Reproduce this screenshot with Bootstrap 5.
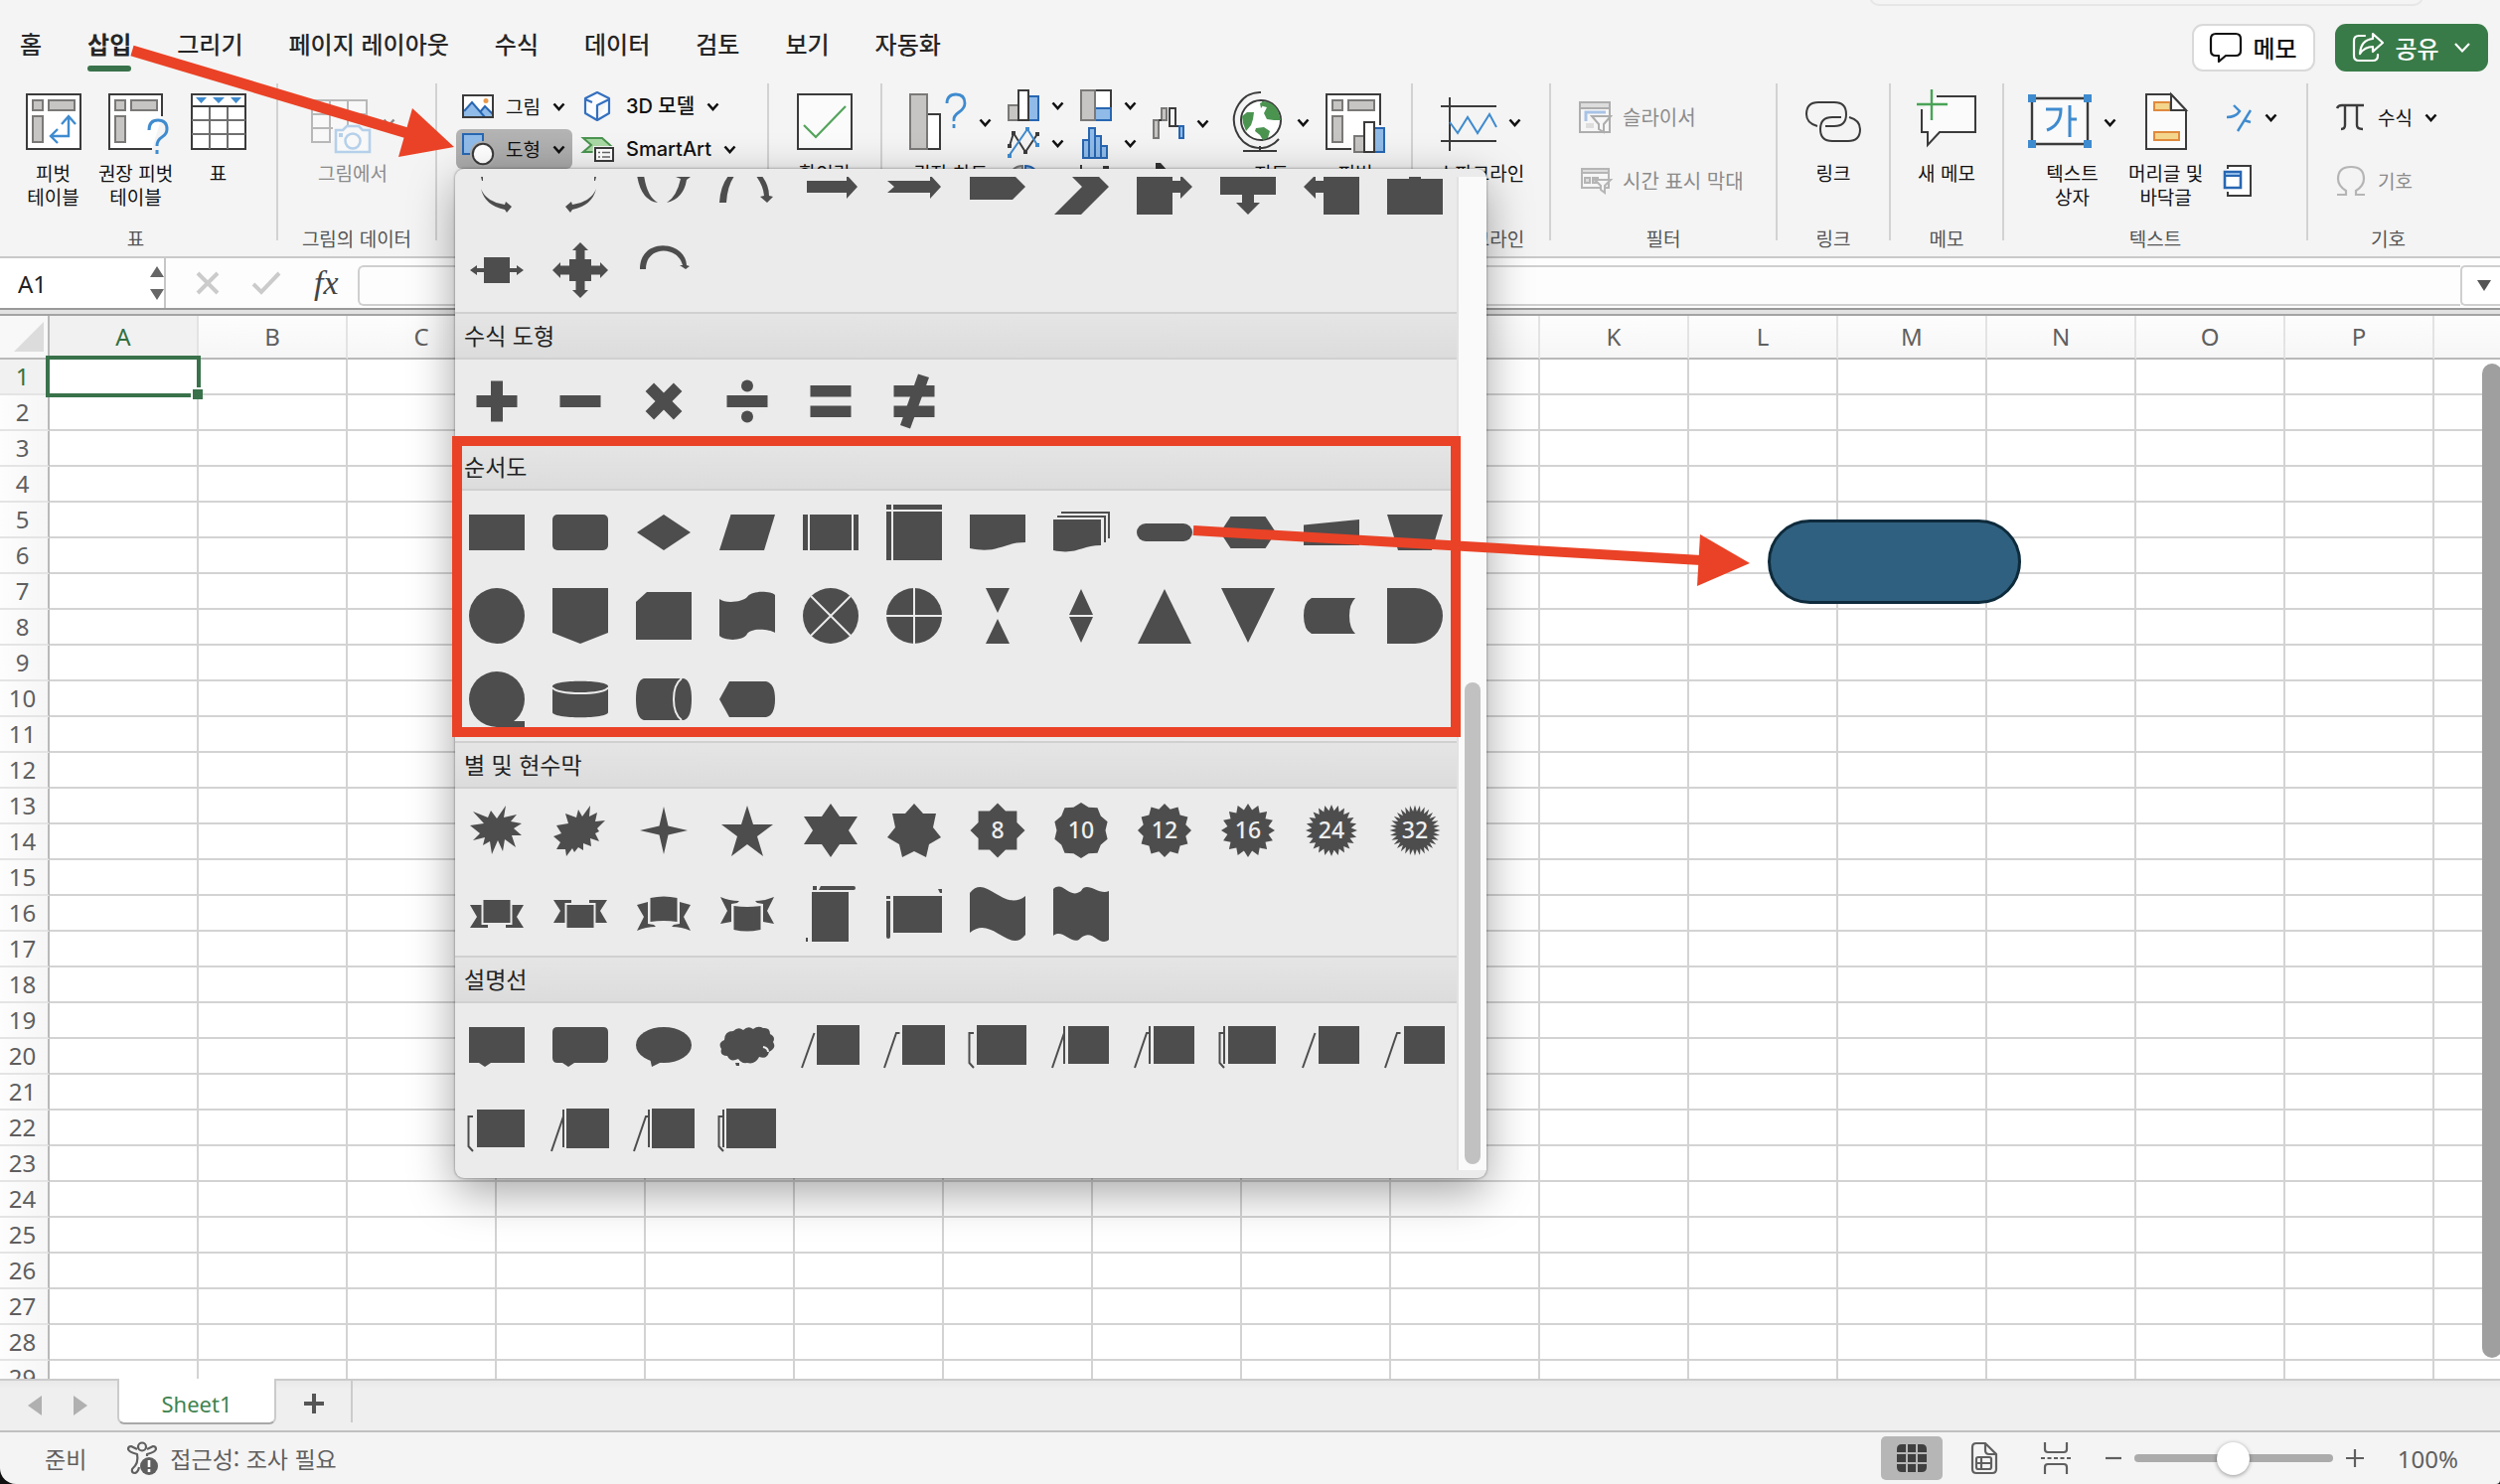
<!DOCTYPE html>
<html lang="ko">
<head>
<meta charset="utf-8">
<meta name="viewport" content="width=device-width, initial-scale=1">
<title>Sheet1</title>
<link href="https://cdn.jsdelivr.net/npm/bootstrap@5.3.0/dist/css/bootstrap.min.css" rel="stylesheet">
<style>
:root{--ink:#3b3b3b;--blue:#3f8bcf;--navy:#2866b2;--sky:#90bbe8;--green:#35703f;--red:#ea4226}
html,body{height:100%}
body{background:#111;font-family:"Noto Sans CJK KR","Noto Sans",sans-serif;color:#111;overflow:hidden}
button{color:inherit;background:none;border:0;padding:0}
svg{display:block;flex:none;overflow:visible}
.app{height:100vh;background:#f4f4f4;border-radius:0 0 4px 16px;overflow:hidden;position:relative}
.peek{right:77px;top:-14px;width:558px;height:20px;border:2px solid #e6e6e6;border-radius:10px}
.tabs{height:84px;padding-left:20px;gap:46px}
.tabs a{color:#262626;font-size:24px;line-height:36px;padding-top:26px;text-decoration:none;white-space:nowrap;font-weight:500}
.tabs a.on{font-weight:700}
.tabs a.on::after{content:"";display:block;height:6px;margin-top:4px;border-radius:3px;background:#39724a}
.topbtns{padding:24px 12px 0 0;gap:20px}
.topbtns button{height:48px;border-radius:11px;font-size:24px;font-weight:500;gap:11px}
.memo{width:124px;background:#fff;border:2px solid #d9d9d9!important}
.share{width:154px;background:#397b48;color:#fff}
.ribbon{height:176px;border-bottom:2px solid #c9c9c9;font-size:19px;line-height:24px}
.grp{position:relative;height:158px}
.grp:not(:last-child){border-right:2px solid #d2d2d2}
.grp .body{height:144px;padding-top:6px}
.grp .cap{line-height:24px;color:#555;text-align:center;white-space:nowrap}
.big{display:flex;flex-direction:column;align-items:center;text-align:center;white-space:nowrap}
.big .ic{display:flex;align-items:center;height:66px;margin-bottom:6px;gap:12px}
.w83{width:83px}
.g-table{padding:0 17px 0 12px;width:280px}
.g-160{width:160px}.g-114{width:114px}.g-334{width:334px}.g-534{width:534px}.g-140{width:139px}.g-228{width:228px}.g-306{width:306px}
.g-160 .body{padding-right:8px}
.g-334 .body{padding:3px 0 0 19px}
.g-334 .col2{padding-left:10px}
.itm{display:flex;align-items:center;height:40px;white-space:nowrap;margin-bottom:3px;gap:12px}
.itm.pk{padding:0 6px;width:117px}
.itm.open{background:linear-gradient(#b4b4b4,#a9a9a9);border-radius:6px}
.latin{font-family:Inter,"Noto Sans CJK KR",sans-serif;font-weight:500;font-size:20px}
.g-534 .body{padding-left:27px;gap:16px}
.stack{display:flex;flex-direction:column;gap:6px}
.stack button{display:flex;gap:12px;align-items:center;height:32px}
.stack.wf{gap:24px;padding-top:18px}
.dim{color:#8b8b8b}
.pair{display:flex;align-items:center;gap:12px;height:56px;white-space:nowrap}
.pair+.pair{margin-top:8px}
.g-228 .pair{font-size:20px}
.g-306 .body{gap:12px}
.g-306 .art{padding-left:8px}
.chev{width:13px;height:9px}
.fbar{height:52px;background:#fdfdfd;border-bottom:2px solid #999}
.namebox{width:168px;border-right:2px solid #c6c6c6;background:#fff;padding-right:0}
.namebox input{width:151px;border:0;background:none;padding:0 0 0 18px;font:24px "Noto Sans",sans-serif;color:#222}
.fbar .fx{gap:34px;width:193px;padding-left:31px}
.fbar .fx i{font:italic 34px "Liberation Serif",serif;color:#444}
.fbar .line{height:41px;margin-top:7px;border:2px solid #cfcfcf;border-right:0;border-radius:6px 0 0 6px;background:#fdfdfd;width:100%}
.fbar .drop{width:40px;height:41px;margin-top:7px;border:2px solid #cfcfcf;border-right:0;border-radius:5px 0 0 5px;background:#fff;flex:none;padding-left:15px}
.rule{height:6px;background:#e2e2e2;border-bottom:2px solid #a3a3a3}
.sheet{flex:1;min-height:0;overflow:hidden;position:relative;background:#fff}
.cells{table-layout:fixed;border-collapse:separate;border-spacing:0;width:2600px;font:24px/34px "Noto Sans",sans-serif;color:#5f5f5f}
.cells th{font-weight:400;text-align:center;padding:0}
.cells thead th{height:44px;background:linear-gradient(#fdfdfd,#f6f6f6);border-bottom:2px solid #b9b9b9;border-right:2px solid #e3e3e3}
.cells thead th.pick{background:#f1f1f1;color:#35703f}
.cells tbody th{height:36px;border-right:2px solid #b9b9b9;border-bottom:2px solid #e4e4e4;background:linear-gradient(90deg,#fdfdfd,#f6f6f6);padding-right:3px}
.cells tbody th.pick{background:#f1f1f1;color:#35703f}
.cells td{height:36px;padding:0;border-right:2px solid #d3d3d3;border-bottom:2px solid #d3d3d3}
.cells thead th.corner{border-right-color:#b9b9b9;padding-left:14px;background:#f8f8f8}
.cursor{left:46px;top:40px;width:156px;height:42px;border:4px solid #39724a}
.cursor::after{content:"";position:absolute;right:-6px;bottom:-6px;width:12px;height:12px;background:#39724a;border:solid #fff;border-width:2px 0 0 2px}
.vbar{right:-2px;top:48px;bottom:21px;width:20px;border-radius:10px;background:#9f9f9f}
.pill{left:1779px;top:205px;width:255px;height:85px;border-radius:43px;background:#30607f;border:3px solid #0e2b3c}
.tabsbar{height:54px;background:linear-gradient(#e9e9e9,#efefef 8px);border-top:2px solid #cbcbcb;border-bottom:2px solid #c0c0c0}
.tabsbar .nav2{width:118px;padding:0 0 0 28px;gap:32px}
.tabsbar .tab{width:160px;height:46px;margin-top:-2px;background:#fff;border:2px solid #cbcbcb;border-top:0;border-bottom-color:#a8a8a8;border-radius:0 0 7px 7px;font:22px/46px "Noto Sans",sans-serif;color:#3e8350;padding-top:2px}
.tabsbar .add{width:77px;height:42px;border-right:2px solid #cbcbcb;padding:4px 0 0 28px}
.status{height:52px;font-size:23px;color:#5f5f5f;padding:0 42px 0 45px}
.status .a11y{margin:0 9px 0 41px}
.status .views{gap:29px}
.status .viewbtn{width:62px;height:44px;border-radius:5px;background:#b6b6b6;padding-left:16px}
.status .brk{margin-left:15px}
.status .zoomset{gap:13px;margin-left:35px}
.status .pct{font:24px "Noto Sans",sans-serif;margin-left:34px}
.zoomr{-webkit-appearance:none;appearance:none;width:200px;height:8px;border-radius:4px;background:#ababab}
.zoomr::-webkit-slider-thumb{-webkit-appearance:none;width:33px;height:33px;border-radius:50%;background:#fff;box-shadow:0 1px 4px rgba(0,0,0,.4)}
.gallery{position:absolute;left:-1px;top:100%;width:1038px;height:1016px;z-index:5;background:#ebebeb;border-radius:9px;padding:8px 0;box-shadow:0 0 2px 1px rgba(0,0,0,.22),0 14px 46px rgba(0,0,0,.36)}
.gallery .list{width:1010px;height:1000px;overflow:hidden;display:flex;flex-direction:column;justify-content:flex-end;border-right:2px solid #e2e2e2}
.gallery h6{height:48px;margin:0;padding-left:9px;font-size:23px;line-height:42px;font-weight:400;color:#222;background:linear-gradient(#e5e5e5,#dcdcdc);border:solid #d0d0d0;border-width:2px 0;flex:none}
.gallery .tiles{display:flex;flex-wrap:wrap;flex:none}
.gallery .tiles button{width:84px;height:84px}
.gallery .rail{width:28px;background:#fafafa;padding:509px 6px 6px}
.gallery .rail div{height:100%;width:16px;border-radius:8px;background:#c1c1c1}
.tiles svg{fill:#4d4d4d;stroke:none}
.tiles .ln{fill:none;stroke:#4d4d4d;stroke-width:2}
.tiles .lt{fill:none;stroke:#ebebeb;stroke-width:2}
.tiles text{fill:#efefef;font:500 23px "Noto Sans",sans-serif;text-anchor:middle}
.marks{left:0;top:0;width:100%;height:100%;pointer-events:none;z-index:10}
</style>
</head>
<body>
<svg width="0" height="0" class="position-absolute" aria-hidden="true">
  <symbol id="chev" viewBox="0 0 13 9"><path d="M1.500 1.500 6.500 7 11.500 1.500" fill="none" stroke="currentColor" stroke-width="2.600"/></symbol>
</svg>
<div class="app d-flex flex-column">
  <div class="peek position-absolute"></div>
  <header class="d-flex justify-content-between">
    <nav class="tabs d-flex" aria-label="리본 탭">
      <a href="#">홈</a><a href="#" class="on">삽입</a><a href="#">그리기</a><a href="#">페이지 레이아웃</a><a href="#">수식</a><a href="#">데이터</a><a href="#">검토</a><a href="#">보기</a><a href="#">자동화</a>
    </nav>
    <div class="topbtns d-flex">
      <button class="memo d-flex align-items-center justify-content-center">
        <svg width="32" height="32" viewBox="0 0 32 32" fill="none" stroke="#111" stroke-width="2.200"><path d="M6 2H26Q31 2 31 7V19Q31 24 26 24H16L9 30V24H6Q1 24 1 19V7Q1 2 6 2Z" stroke-linejoin="round"/></svg>메모</button>
      <button class="share d-flex align-items-center justify-content-center">
        <svg width="31" height="30" viewBox="0 0 31 30" fill="none" stroke="#fff" stroke-width="2.200" stroke-linejoin="round" stroke-linecap="round"><path d="M12 3H6Q1 3 1 8V23Q1 28 6 28H20Q25 28 25 23V22"/><path d="M20 1 30 10 20 19V14Q12 14 7 21 8 7 20 6Z"/></svg>공유
        <svg width="16" height="10" viewBox="0 0 16 10" fill="none" stroke="#fff" stroke-width="2.200" class="ms-1"><path d="M1 1 8 8.500 15 1"/></svg></button>
    </div>
  </header>

  <div class="ribbon d-flex">
    <section class="grp g-table">
      <div class="body d-flex">
        <button class="big w83"><span class="ic"><svg width="60" height="66" viewBox="0 0 60 66" fill="#fff" stroke="#3b3b3b" stroke-width="2"><path d="M3 5H57V60H3Z"/><g fill="#c6c5c4" stroke="#7a7978"><path d="M9 11H19V21H9ZM25 11H51V21H25ZM9 27H19V53H9Z"/></g><path d="M27 47H45V28M38 35 45 27 52 35M34 40 27 47 34 54" fill="none" stroke="#3f8bcf" stroke-width="2.400"/></svg></span>피벗<br>테이블</button>
        <button class="big w83"><span class="ic"><svg width="60" height="66" viewBox="0 0 60 66" fill="#fff" stroke="#3b3b3b" stroke-width="2"><path d="M46 60H3V5H56V27" /><g fill="#c6c5c4" stroke="#7a7978"><path d="M9 11H19V21H9ZM25 11H51V21H25ZM9 27H19V53H9Z"/></g><path d="M43 41Q43 31 52 31T61 40Q61 45 56 48T51 57M51 61V65" fill="none" stroke="#3f8bcf" stroke-width="3"/></svg></span>권장 피벗<br>테이블</button>
        <button class="big w83"><span class="ic"><svg width="60" height="66" viewBox="0 0 60 66" fill="#fff" stroke="#3b3b3b" stroke-width="2"><path d="M3 5H57V60H3Z"/><path d="M21 18V60M39 18V60M3 31H57M3 45H57" stroke="#6f6f6f"/><path d="M3 17H57"/><path d="M7 8H18L12.500 14ZM24 8H36L30 14ZM42 8H53L47.500 14Z" fill="#3f8bcf" stroke="none"/></svg></span>표</button>
      </div><div class="cap">표</div>
    </section>
    <section class="grp g-160">
      <div class="body d-flex justify-content-center">
        <button class="big dim" disabled><span class="ic"><svg width="60" height="66" viewBox="0 0 60 66" fill="#f8f8f8" stroke="#b8b8b8" stroke-width="2"><path d="M20 53H1V11H56V34M19 11V53M37 11V38M1 25H56M1 39H22"/><path d="M25 41H32L36 37H48L52 41H59V63H25Z" stroke="#b5d0ea" stroke-width="2.600"/><circle cx="42" cy="52" r="7.500" stroke="#b5d0ea" stroke-width="2.600"/><path d="M28 44h4v4h-4z" fill="#b5d0ea" stroke="none"/></svg><svg class="chev"><use href="#chev"/></svg></span>그림에서</button>
      </div><div class="cap">그림의 데이터</div>
    </section>
    <section class="grp g-334">
      <div class="body d-flex">
        <div>
          <button class="itm pk"><svg width="32" height="24" viewBox="0 0 32 24"><path d="M1 1H31V23H1Z" fill="#fff"/><path d="M2 18 10 8 23 23H2ZM18 18 23 12 31 20V23H23Z" fill="#90bbe8"/><path d="M2 17 10 8 23 23M18 18 23 12 31 20" fill="none" stroke="#2866b2" stroke-width="2"/><circle cx="24" cy="6.500" r="2.500" fill="#e99a4b"/><path d="M1 1H31V23H1Z" fill="none" stroke="#3b3b3b" stroke-width="2"/></svg>그림<svg class="chev"><use href="#chev"/></svg></button>
          <div class="position-relative">
            <button class="itm pk open mb-0" aria-expanded="true"><svg width="32" height="32" viewBox="0 0 32 32"><path d="M1 1H21V21H1Z" fill="#90bbe8" stroke="#2866b2" stroke-width="2"/><circle cx="21" cy="21" r="13" fill="#b0b0b0"/><circle cx="21" cy="21" r="10.200" fill="#fff" stroke="#3b3b3b" stroke-width="2"/></svg>도형<svg class="chev"><use href="#chev"/></svg></button>
            <div class="gallery d-flex"><div class="list" id="list"></div><div class="rail"><div></div></div></div>
          </div>
        </div>
        <div class="col2">
          <button class="itm latin"><svg width="32" height="32" viewBox="0 0 32 32" fill="#fafcff" stroke="#3470bf" stroke-width="2.200"><path d="M15 2 27 8V23L15 30 3 23V8ZM27 9 15 15V30M3 9 10 12" stroke-linejoin="round"/></svg>3D 모델<svg class="chev"><use href="#chev"/></svg></button>
          <button class="itm latin"><svg width="32" height="26" viewBox="0 0 32 26"><path d="M1 2H20L29 10 24 16H1L9 9Z" fill="#a9d9a5" stroke="#4b9450" stroke-width="2"/><path d="M11 10H33V27H10Z" fill="#f4f4f4"/><path d="M13 12H31V25H13Z" fill="#fff" stroke="#3b3b3b" stroke-width="2"/><path d="M16 16.500h2M20 16.500h8M16 21h2M20 21h8" stroke="#666" stroke-width="1.500"/></svg>SmartArt<svg class="chev"><use href="#chev"/></svg></button>
        </div>
      </div>
    </section>
    <section class="grp g-114">
      <div class="body d-flex justify-content-center">
        <button class="big"><span class="ic"><svg width="60" height="66" viewBox="0 0 60 66" fill="#fbfbfb" stroke="#3b3b3b" stroke-width="2"><path d="M3 5H57V60H3Z"/><path d="M9 36 21 48 51 17" fill="none" stroke="#53a45b" stroke-width="2.200"/></svg></span>확인란</button>
      </div>
    </section>
    <section class="grp g-534">
      <div class="body d-flex">
        <button class="big"><span class="ic"><svg width="58" height="66" viewBox="0 0 58 66" fill="#fff" stroke="#3b3b3b" stroke-width="2"><path d="M18 25H31V60H18Z"/><path d="M1 5H18V60H1Z" fill="#c6c5c4" stroke="#7a7978"/><path d="M38 14Q38 5 47 5T56 14Q56 19 50 23T45 32M45 35V39" fill="none" stroke="#3f8bcf" stroke-width="2.800"/></svg><svg class="chev"><use href="#chev"/></svg></span>권장 차트</button>
        <div class="stack">
          <button aria-label="막대형"><svg width="32" height="32" viewBox="0 0 32 32" fill="#fff" stroke-width="2"><path d="M1 16H11V31H1Z" fill="#c6c5c4" stroke="#7a7978"/><path d="M21 7H31V31H21Z" fill="#90bbe8" stroke="#2866b2"/><path d="M11 1H21V31H11Z" stroke="#3b3b3b"/></svg><svg class="chev"><use href="#chev"/></svg></button>
          <button aria-label="꺾은선형"><svg width="32" height="32" viewBox="0 0 32 32" fill="none" stroke-width="2"><path d="M2 19 6 6 18 25 30 7" stroke="#3b3b3b"/><path d="M2 28 20 2 30 18" stroke="#3f8bcf"/><path d="M0 17h4v4h-4zM4 4h4v4h-4zM16 23h4v4h-4zM28 5h4v4h-4z" fill="#3b3b3b"/><path d="M0 27h4v4h-4zM18 0h4v4h-4zM28 16h4v4h-4z" fill="#3f8bcf"/></svg><svg class="chev"><use href="#chev"/></svg></button>
          <button aria-label="원형"><svg width="32" height="32" viewBox="0 0 32 32" stroke-width="2"><path d="M15 1A14 14 0 1 0 15 29Z" fill="#c6c5c4" stroke="#7a7978"/><path d="M18 1A14 14 0 0 1 18 29Z" fill="#90bbe8" stroke="#2866b2"/></svg></button>
        </div>
        <div class="stack">
          <button aria-label="트리맵"><svg width="32" height="32" viewBox="0 0 32 32" fill="#fff" stroke-width="2"><path d="M15 1H31V19H15Z" stroke="#3b3b3b"/><path d="M15 19H31V31H15Z" fill="#90bbe8" stroke="#2866b2"/><path d="M1 1H15V31H1Z" fill="#c6c5c4" stroke="#7a7978"/></svg><svg class="chev"><use href="#chev"/></svg></button>
          <button aria-label="히스토그램"><svg width="32" height="32" viewBox="0 0 32 32" fill="#90bbe8" stroke="#2866b2" stroke-width="2"><path d="M3 13H9V31H3ZM9 1H15V31H9ZM15 9H21V31H15ZM21 19H27V31H21Z"/></svg><svg class="chev"><use href="#chev"/></svg></button>
          <button aria-label="분산형"><svg width="32" height="32" viewBox="0 0 32 32" fill="none" stroke="#3b3b3b" stroke-width="2"><path d="M1 0V31H31"/><path d="M24 2h4v4h-4z" fill="#3b3b3b"/></svg></button>
        </div>
        <div class="stack wf">
          <button aria-label="폭포"><svg width="32" height="32" viewBox="0 0 32 32" fill="none" stroke-width="2"><path d="M1 13H6V31H1ZM9 1H14V13H9Z" fill="#c6c5c4" stroke="#7a7978"/><path d="M17 1H23V19H17ZM6 13H9M23 19H27" stroke="#3b3b3b"/><path d="M27 19H31V31H27Z" fill="#90bbe8" stroke="#2866b2"/></svg><svg class="chev"><use href="#chev"/></svg></button>
          <button aria-label="콤보"><svg width="32" height="32" viewBox="0 0 32 32"><path d="M3 0H8L16 9H3Z" fill="#333"/></svg></button>
        </div>
        <button class="big ms-2"><span class="ic"><svg width="52" height="66" viewBox="0 0 52 66" fill="none" stroke="#3b3b3b" stroke-width="2"><path d="M28 3A26 28 0 1 0 46 50M27 57V62M10 62H44"/><circle cx="28" cy="31" r="20" fill="#fff"/><path d="M29 12Q40 12 45 21L48 31 41 31 34 30 31 24 34 18 30 17ZM27 14l4-2v3l-3 4zM9 27l5-4 7 0-1 7-2 6-5 6-3-8zM23 39l8-1 6 4-2 7-5 2-3-5-5-4z" fill="#4b9450" stroke="none"/></svg><svg class="chev"><use href="#chev"/></svg></span>지도</button>
        <button class="big"><span class="ic"><svg width="60" height="66" viewBox="0 0 60 66" fill="#fff" stroke="#3b3b3b" stroke-width="2"><path d="M26 60H1V5H55V36"/><g fill="#c6c5c4" stroke="#7a7978"><path d="M7 11H17V21H7ZM23 11H49V21H23ZM7 27H17V53H7ZM29 47H39V63H29Z"/></g><path d="M49 39H59V63H49Z" fill="#90bbe8" stroke="#2866b2"/><path d="M39 33H49V63H39Z"/></svg></span>피벗<br>차트</button>
      </div>
    </section>
    <section class="grp g-140">
      <div class="body d-flex justify-content-center">
        <button class="big"><span class="ic"><svg width="56" height="66" viewBox="0 0 56 66" fill="none" stroke="#3b3b3b" stroke-width="2"><path d="M0 17H56M0 52H56M9 8V62"/><path d="M9 33 17 44 27 28 37 44 49 25 56 38" stroke="#3f8bcf"/></svg><svg class="chev"><use href="#chev"/></svg></span>스파크라인</button>
      </div><div class="cap">스파크라인</div>
    </section>
    <section class="grp g-228">
      <div class="body ps-4 dim"><div class="ps-1">
        <button class="pair" disabled><svg width="32" height="32" viewBox="0 0 32 32" fill="#f6f6f6" stroke="#adadad" stroke-width="2"><path d="M1 1H31V31H1Z"/><path d="M1 1H31V7H1Z" fill="#ddd"/><path d="M7 20V11H27" fill="none" stroke="#a9c3e6" stroke-width="3"/><path d="M7 22h8v5H7z" fill="#ddd" stroke="none"/><path d="M13 15H32L25 23V31L20 28V23Z"/></svg>슬라이서</button>
        <button class="pair" disabled><svg width="32" height="26" viewBox="0 0 32 26" fill="#f6f6f6" stroke="#b5b5b5" stroke-width="2"><path d="M3 1H30V20H3Z"/><path d="M3 1H30V5H3Z" fill="#ddd"/><path d="M6 10h5v5H6zM14 10h5v5h-5z" fill="#ddd"/><path d="M16 12H32L26 18V25L22 22V18Z"/></svg>시간 표시 막대</button>
      </div></div><div class="cap">필터</div>
    </section>
    <section class="grp g-114">
      <div class="body d-flex justify-content-center">
        <button class="big"><span class="ic"><svg width="56" height="66" viewBox="0 0 56 66" fill="none" stroke="#3b3b3b" stroke-width="2"><path d="M12 37Q1 34 1 25 1 13 13 13H29Q41 13 41 25 41 37 29 37H20M44 28Q55 31 55 40 55 52 43 52H27Q15 52 15 40 15 28 27 28H36"/></svg></span>링크</button>
      </div><div class="cap">링크</div>
    </section>
    <section class="grp g-114">
      <div class="body d-flex justify-content-center">
        <button class="big"><span class="ic"><svg width="60" height="66" viewBox="0 0 60 66" fill="#fbfbfb" stroke="#3b3b3b" stroke-width="2"><path d="M20 7H59V43H23L11 56V43H5V20"/><path d="M15 0V31M0 15H31" stroke="#49a457" stroke-width="2.400"/></svg></span>새 메모</button>
      </div><div class="cap">메모</div>
    </section>
    <section class="grp g-306">
      <div class="body d-flex ps-4">
        <button class="big"><span class="ic"><svg width="64" height="66" viewBox="0 0 64 66" fill="none" stroke="#3b3b3b" stroke-width="2.400"><path d="M4 9H60V55H4Z" fill="#fafafa"/><path d="M0 5h8v8H0zM56 5h8v8h-8zM0 51h8v8H0zM56 51h8v8h-8z" fill="#3f8bcf" stroke="none"/><path d="M18 20H33Q33 36 19 41M42 16V48M42 30H49" stroke="#3f8bcf" stroke-width="3"/></svg><svg class="chev"><use href="#chev"/></svg></span>텍스트<br>상자</button>
        <button class="big"><span class="ic"><svg width="42" height="66" viewBox="0 0 42 66" fill="#fbfbfb" stroke="#3b3b3b" stroke-width="2"><path d="M1 5H26L41 21V60H1Z"/><path d="M9 13H25V21H9ZM9 43H34V51H9Z" fill="#f4d58c" stroke="#e08a3c"/><path d="M26 5V21H41Z"/></svg></span>머리글 및<br>바닥글</button>
        <div class="art">
          <button class="pair" aria-label="WordArt"><svg width="30" height="30" viewBox="0 0 30 30" fill="none" stroke="#3f8bcf" stroke-width="2.400"><path d="M11 3 17 9Q13 15 4 15M28 8 15 29M21 18 28 20"/></svg><svg class="chev"><use href="#chev"/></svg></button>
          <button class="pair" aria-label="개체"><svg width="30" height="32" viewBox="0 0 30 32" fill="#fff" stroke="#3b3b3b" stroke-width="2"><path d="M5 4V1H28V31H5V27"/><path d="M2 7H18V23H2Z" stroke="#2866b2" stroke-width="2.600"/><path d="M2 7H18V11H2Z" fill="#90bbe8" stroke="#2866b2"/></svg></button>
        </div>
      </div><div class="cap">텍스트</div>
    </section>
    <section class="grp flex-fill">
      <div class="body ps-4"><div class="ps-1">
        <button class="pair"><svg width="30" height="28" viewBox="0 0 30 28" fill="none" stroke="#3b3b3b" stroke-width="2.400"><path d="M1 5Q2 2 6 2H28M9 2V22Q9 26 5 26M21 2V22Q21 26 27 26"/></svg>수식<svg class="chev"><use href="#chev"/></svg></button>
        <button class="pair dim" disabled><svg width="30" height="30" viewBox="0 0 30 30" fill="none" stroke="#b5b5b5" stroke-width="2.200"><path d="M1 29H10V25Q2 20 2 13 2 1 15 1T28 13Q28 20 20 25V29H29"/></svg>기호</button>
      </div></div><div class="cap pe-4 me-2">기호</div>
    </section>
  </div>

  <div class="fbar d-flex">
    <div class="namebox d-flex align-items-center"><input type="text" value="A1" aria-label="이름 상자"><svg width="14" height="34" viewBox="0 0 14 34" fill="#666"><path d="M7 0 14 11H0ZM7 34 14 23H0Z"/></svg></div>
    <div class="fx d-flex align-items-center flex-shrink-0">
      <svg width="22" height="22" viewBox="0 0 22 22" stroke="#cbcbcb" stroke-width="4" fill="none"><path d="M1 1 21 21M21 1 1 21"/></svg>
      <svg width="28" height="22" viewBox="0 0 28 22" stroke="#cbcbcb" stroke-width="4" fill="none"><path d="M1 12 9 20 27 1"/></svg>
      <i>fx</i>
    </div>
    <input class="line" type="text" aria-label="수식 입력줄">
    <button class="drop" aria-label="확장"><svg width="14" height="11" viewBox="0 0 14 11" fill="#555"><path d="M0 0H14L7 11Z"/></svg></button>
  </div>
  <div class="rule"></div>

  <main class="sheet">
    <table class="cells"><colgroup id="cg"></colgroup><thead><tr id="hd"></tr></thead><tbody id="bd"></tbody></table>
    <div class="cursor position-absolute"></div>
    <div class="pill position-absolute"></div>
    <div class="vbar position-absolute"></div>
  </main>

  <div class="tabsbar d-flex flex-shrink-0">
    <div class="nav2 d-flex align-items-center"><svg width="14" height="20" viewBox="0 0 14 20" fill="#b0b0b0"><path d="M14 0V20L0 10Z"/></svg><svg width="14" height="20" viewBox="0 0 14 20" fill="#b0b0b0"><path d="M0 0V20L14 10Z"/></svg></div>
    <button class="tab">Sheet1</button>
    <button class="add" aria-label="새 시트"><svg width="20" height="20" viewBox="0 0 20 20" stroke="#555" stroke-width="4"><path d="M10 0V20M0 10H20"/></svg></button>
  </div>
  <footer class="status d-flex align-items-center flex-shrink-0">
    <span>준비</span>
    <svg class="a11y" width="34" height="34" viewBox="0 0 34 34" fill="none" stroke="#5f5f5f" stroke-width="2.200"><circle cx="15" cy="5.500" r="4"/><path d="M10 8 4 5Q1 5 1 8 2 11 10 13 12 22 5 28 4 32 8 32 11 31 12 26M20 8 26 5Q29 5 29 8 28 11 20 13V15" stroke-linejoin="round"/><circle cx="22" cy="25" r="9" fill="#5f5f5f" stroke="none"/><path d="M22 19V26M22 28V31" stroke="#fff" stroke-width="2.600"/></svg>
    <span>접근성: 조사 필요</span>
    <div class="views d-flex align-items-center ms-auto">
      <button class="viewbtn" aria-label="기본 보기"><svg width="30" height="28" viewBox="0 0 30 28" fill="#3f3f3f"><path d="M5 0H9V8H0V5Q0 0 5 0ZM11 0H19V8H11ZM21 0H25Q30 0 30 5V8H21ZM0 10H9V18H0ZM11 10H19V18H11ZM21 10H30V18H21ZM0 20H9V28H5Q0 28 0 23ZM11 20H19V28H11ZM21 20H30V23Q30 28 25 28H21Z"/></svg></button>
      <button aria-label="페이지 레이아웃"><svg width="26" height="32" viewBox="0 0 26 32" fill="none" stroke="#5f5f5f" stroke-width="2.200"><path d="M5 1H14L25 12V27Q25 31 21 31H5Q1 31 1 27V5Q1 1 5 1ZM14 1V8Q14 12 18 12H25"/><path d="M7 15H18Q20 15 20 17V25Q20 27 18 27H7Q5 27 5 25V17Q5 15 7 15ZM5 21H20M10 15V27"/></svg></button>
      <button class="brk" aria-label="페이지 나누기"><svg width="30" height="32" viewBox="0 0 30 32" fill="none" stroke="#5f5f5f" stroke-width="2.200"><path d="M4 0V7Q4 10 7 10H23Q26 10 26 7V0M4 32V25Q4 22 7 22H23Q26 22 26 25V32"/><path d="M0 16H30" stroke-dasharray="4 2.500"/></svg></button>
    </div>
    <div class="zoomset d-flex align-items-center">
      <button aria-label="축소"><svg width="16" height="20" viewBox="0 0 16 20" stroke="#5f5f5f" stroke-width="2.200"><path d="M0 10H16"/></svg></button>
      <input class="zoomr" type="range" aria-label="확대/축소" min="0" max="200" value="100">
      <button aria-label="확대"><svg width="18" height="20" viewBox="0 0 18 20" stroke="#5f5f5f" stroke-width="2.200"><path d="M0 10H18M9 1V19"/></svg></button>
    </div>
    <span class="pct">100%</span>
  </footer>

  <svg class="marks position-absolute" aria-hidden="true">
    <rect x="460" y="444" width="1005" height="293" fill="none" stroke="#ea4226" stroke-width="10"/>
    <path d="M133 51 410 134" stroke="#ea4226" stroke-width="11"/><path d="M457 148 415 109 401 158Z" fill="#ea4226"/>
    <path d="M1201 534 1712 564" stroke="#ea4226" stroke-width="10"/><path d="M1761 567 1711 538 1708 590Z" fill="#ea4226"/>
  </svg>
</div>
<script src="https://cdn.jsdelivr.net/npm/bootstrap@5.3.0/dist/js/bootstrap.bundle.min.js"></script>
<script>
const letters=[...'ABCDEFGHIJKLMNOP',''];
cg.innerHTML='<col style="width:50px">'+letters.map(()=>'<col style="width:150px">').join('');
hd.innerHTML='<th class="corner"><svg width="30" height="30" viewBox="0 0 30 30"><path d="M30 0V30H0Z" fill="#dcdcdc"/></svg></th>'+letters.map((c,i)=>`<th class="${i?'':'pick'}">${c}</th>`).join('');
bd.innerHTML=Array.from({length:29},(_,r)=>`<tr><th class="${r?'':'pick'}">${r+1}</th>${'<td></td>'.repeat(letters.length)}</tr>`).join('');

const p=(d,c)=>`<path d="${d}"${c?` class="${c}"`:''}/>`;
const flip=s=>`<g transform="scale(-1 1)">${s}</g>`;
// regular n-pointed star with its point count written inside
function star(n,R,r){
  let d='';
  for(let i=0;i<2*n;i++){const a=Math.PI*i/n,q=i%2?r:R;d+=(i?'L':'M')+(q*Math.sin(a)).toFixed(1)+' '+(-q*Math.cos(a)).toFixed(1)}
  return p(d+'Z')+`<text y="8">${n}</text>`;
}
// line callout: text block from a to b, leader kind, optional accent bar
function call(a,b,kind,bar,h=19){
  const lead={s:`M-29 23 ${bar?bar:-16.5} -12`,k:`M-30 23-18-12H${bar||-14.5}`,b:'M-24-12H-28.500V18L-24 23'}[kind];
  return p(`M${a} ${-h}H${b}V${h}H${a}Z`)+p(lead,'ln')+(bar?p(`M${bar} -19V19`,'ln'):'');
}
const crescent=p('M-16 2Q-11 15 8 18L9 15 15 20 10 26 8 23Q-12 19-16 2ZM-16-10h2v4h-1z');
const blockR=p('M-28-28H8V-6H16V-12L28 0 16 12V6H8V28H-28Z');
const disc=p('M-28 0A28 28 0 1 1 28 0 28 28 0 1 1-28 0Z');
const sections=[
['',[
 crescent,flip(crescent),
 p('M-27-12H-20Q-17 10-6 16-23 14-27-12ZM3 16Q20 12 23-7L27-10H12L17-8Q13 10 3 16Z'),
 p('M-28 16Q-27-2-18-12H-12Q-20-2-21 16ZM8-12H14Q22-2 22 9L26 10 20 16 13 10 17 9Q16-2 8-12Z'),
 p('M-24-6H16V-12L27 0 16 12V6H-24Z'),p('M-27-6H16V-12L27 0 16 12V6H-27L-20 0Z'),
 p('M-28-13H15L28 0 15 13H-28Z'),p('M-27-28H0L28 0 0 28H-27L1 0Z'),blockR,
 p('M-28-28H28V8H6V16H12L0 28-12 16H-6V8H-28Z'),flip(blockR),p('M-28-8H-6V-20H6V-8H28V28H-28Z'),
 p('M-13-13H13V-2H20V-5L27 0 20 5V2H13V13H-13V2H-20V5L-27 0-20-5V-2H-13Z'),
 p('M-11-11H-4.500V-20H-8L0-28 8-20H4.500V-11H11V-4.500H20V-8L28 0 20 8V4.500H11V11H4.500V20H8L0 28-8 20H-4.500V11H-11V4.500H-20V8L-28 0-20-8V-4.500H-11Z'),
 p('M-24-1C-24-34 22-30 23-5L26-4 22-1 16-5 19-5C14-25-18-25-18-1Z')]],
['수식 도형',[
 p('M-6-20.500H6V-6H20.500V6H6V20.500H-6V6H-20.500V-6H-6Z'),p('M-20.500-6H20.500V6H-20.500Z'),
 `<g transform="rotate(45)">${p('M-6-20H6V-6H20V6H6V20H-6V6H-20V-6H-6Z')}</g>`,
 p('M-20.500-6H20.500V6H-20.500Z')+'<circle cy="-15.500" r="6"/><circle cy="15.500" r="6"/>',
 p('M-20.500-16H20.500V-4.500H-20.500ZM-20.500 4.500H20.500V16H-20.500Z'),
 p('M-20.500-16H20.500V-4.500H-20.500ZM-20.500 4.500H20.500V16H-20.500Z')+p('M4-27.500 15-24-4 27.500-14 24Z')]],
['순서도',[
 p('M-28-18H28V18H-28Z'),'<rect x="-28" y="-18" width="56" height="36" rx="5"/>',p('M-27 0 0-18 27 0 0 18Z'),
 p('M-28 18-16.500-18H28L17 18Z'),p('M-28-18H28V18H-28Z')+p('M-22-18V18M22-18V18','lt'),
 p('M-28-28H28V28H-28Z')+p('M-22-28V28M-28-22H28','lt'),
 p('M-28-18H28V10C5 10 0 22-28 16Z'),
 p('M-28-13H20V13C0 13-4 23-28 18Z')+p('M-24-16H24V10M-20-20H28V6','ln'),
 '<rect x="-28" y="-9" width="56" height="18" rx="9"/>',p('M-28 0-17.500-16H17.500L28 0 17.500 16H-17.500Z'),
 p('M-28-7.500 28-13V13H-28Z'),p('M-28-18H28L17 18H-17Z'),
 disc,p('M-28-28H28V17L0 28-28 17Z'),p('M-28-14-17-24H28V24H-28Z'),
 p('M-28-17C-22-12-4-14 0-19 4-26 24-25 28-21V17C22 13 4 12 0 18-4 26-24 25-28 20Z'),
 disc+p('M-20-20 20 20M20-20-20 20','lt'),disc+p('M0-28V28M-28 0H28','lt'),
 p('M-12-28H12L0-3ZM0 3 12 28H-12Z'),p('M0-27 12-1H-12ZM-12 1H12L0 27Z'),p('M0-27 27 28H-27Z'),p('M-27-28H27L0 27Z'),
 p('M-20-18H24Q18-12 18 0T24 18H-20Q-28 14-28 0T-20-18Z'),p('M-28-28H0A28 28 0 0 1 0 28H-28Z'),
 disc+p('M0 22H28V28H0Z'),
 p('M-28-13C-28-20 28-20 28-13V13C28 20-28 20-28 13Z')+p('M-28-12C-26-4 26-4 28-12','lt'),
 p('M-20-21H20Q28-19 28 0T20 21H-20Q-28 19-28 0T-20-21Z')+p('M18-21Q10-15 10 0T18 21','lt'),
 p('M-28 0-18-18H19Q28-16 28 0T19 18H-18Z')]],
['별 및 현수막',[
 p('M-24-19-9-13-6-20 0-12 9-25 7-13 20-16 14-9 25-7 17-2 25 5 15 5 19 17 8 9 6 21 1 10-5 24-7 11-14 15-12 7-24 10-17 3-27-5-13-7Z'),
 p('M-15-17-4-13-2-21 2-14 10-25 9-14 17-18 15-9 25-10 17-2 19 1 15 3 19 11 10 8 11 16 3 13 3 20-2 17-6 22-8 18-14 26-15 19-24 19-20 12-27 6-19 3-24-5-12-7Z'),
 p('M0-24 4.500-4.500 24 0 4.500 4.500 0 24-4.500 4.500-24 0-4.500-4.500Z'),
 p('M0-25 6-6H26L10 6 16 26 0 14-16 26-10 6-26-6H-6Z'),
 p('M0-27 9-14H27L18 0 27 14H9L0 27-9 14H-27L-18 0-27-14H-9Z'),
 p('M0-27 9-17H22L19-3 27 7 15 14 12 27 0 21-12 27-15 14-27 7-19-3-22-17H-9Z'),
 star(8,27.5,21),star(10,28,24.5),star(12,27,22),star(16,27,21),star(24,26,20),star(32,25.5,19),
 p('M-13.500-14H13.500V9H-13.500ZM-27-9H-15.500V11H-9V14H-27L-20 3ZM27-9H15.500V11H9V14H27L20 3Z'),
 p('M-13.500-9H13.500V14H-13.500ZM-27-14H-9V-11H-15.500V9H-27L-20-3ZM27-14H9V-11H15.500V9H27L20-3Z'),
 p('M-13.500-16Q0-19 13.500-16V8Q0 6-13.500 8ZM-27-9-16-12V10L-10 11-8 13Q-18 13-27 17L-20 3ZM27-9 16-12V10L10 11 8 13Q18 13 27 17L20 3Z'),
 p('M-13.500-8Q0-6 13.500-8V16Q0 19-13.500 16ZM-27-17Q-18-13-8-13L-10-11-16-10V8L-27 10-20-3ZM27-17Q18-13 8-13L10-11 16-10V8L27 10 20-3Z'),
 p('M-19-22H18V28H-19ZM-10-28H23Q25-28 25-26T23-24H-12ZM-18-28h4v4h-4zM-25 24h2v4h-2z'),
 p('M-21-18H28V19H-21ZM-28-13H-24V23Q-24 25-26 25T-28 23ZM-28-18h4v3h-4zM24-25h4v4h-2z'),
 p('M-28-21C-12-42 6 0 28-18V21C12 42-6 0-28 19Z'),
 p('M-28-25C-18-34-12-14 0-23 6-34 18-18 28-23V26C18 34 12 14 0 24-8 34-18 14-28 22Z')]],
['설명선',[
 p('M-28-18H28V18H-6L-12 22-18 18H-28Z'),p('M-23-18H23Q28-18 28-13V13Q28 18 23 18H-6L-12 22-18 18H-23Q-28 18-28 13V-13Q-28-18-23-18Z'),
 '<ellipse rx="28" ry="18"/>'+p('M-14 13-12 22-2 17Z'),
 p('M-23-5Q-23-14-14-14-9-19-4-15 1-20 6-16 11-20 16-17 23-18 23-11 29-8 26-3 30 3 22 7 20 15 12 12 8 20 0 18-6 19-9 14-17 18-20 11-28 11-26 4-30-2-23-5ZM-12 18h4v3h-3z')+p('M16 2Q21 3 21 7','lt'),
 call(-14,29,'s',0,20),call(-12,31,'k',0,20),call(-21,29,'b',0,20),call(-13,28,'s',-17),call(-11,30,'k',-15),call(-20,28,'b',-24),call(-13,28,'s'),call(-11,30,'k'),
 call(-20,28,'b'),call(-14,29,'s',-17,20),call(-12,31,'k',-15,20),call(-21,29,'b',-24,20)]]
];
list.innerHTML=sections.map(([t,s])=>(t?`<h6>${t}</h6>`:'')+`<div class="tiles">${s.map(x=>`<button aria-label="도형"><svg width="84" height="84" viewBox="-42 -42 84 84">${x}</svg></button>`).join('')}</div>`).join('');
</script>
</body>
</html>
